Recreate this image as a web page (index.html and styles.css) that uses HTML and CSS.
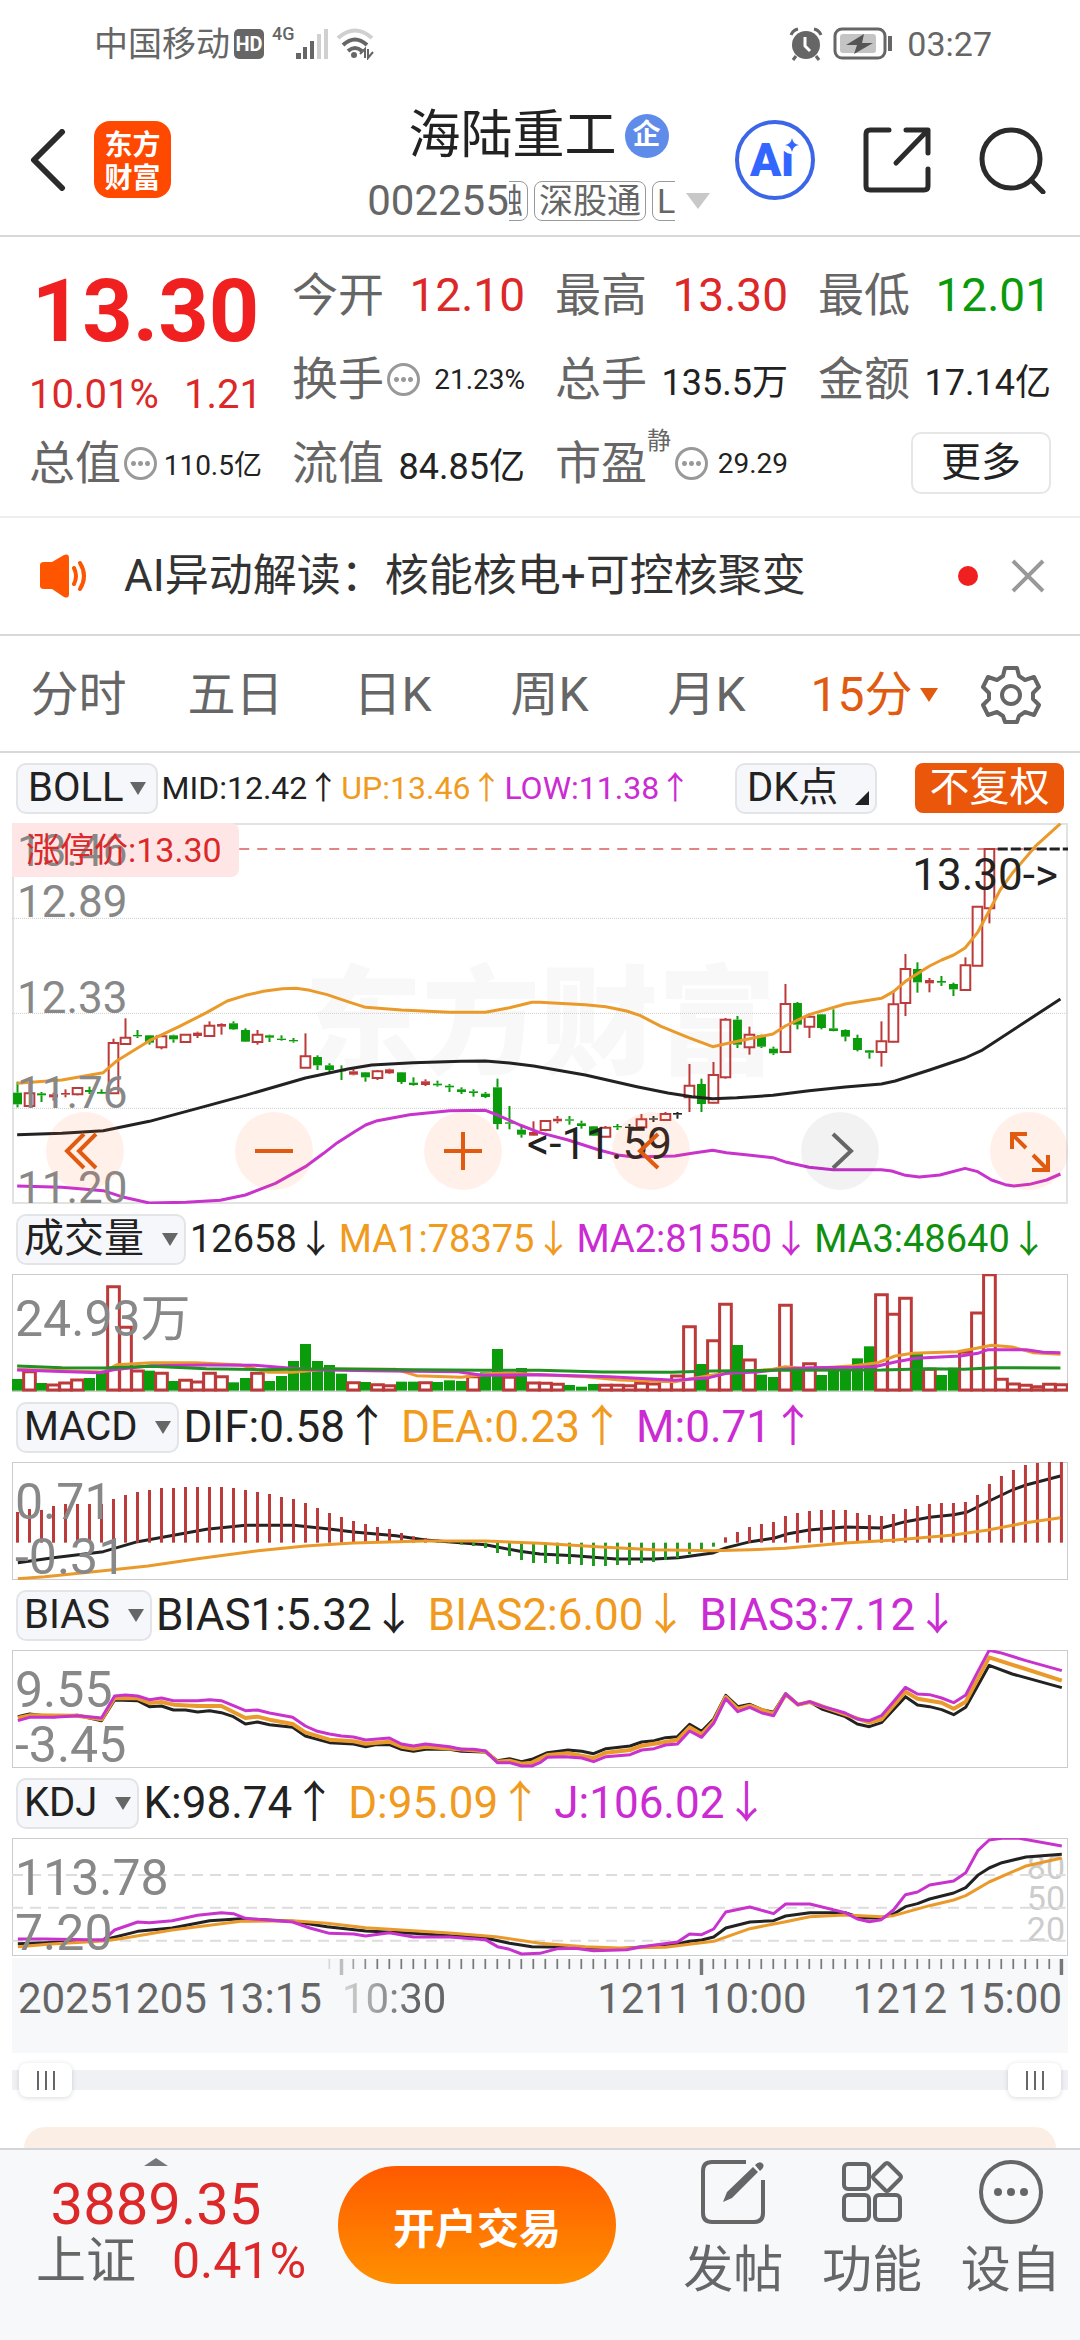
FILE: index.html
```html
<!DOCTYPE html>
<html lang="zh-CN">
<head>
<meta charset="utf-8">
<meta name="viewport" content="width=device-width, initial-scale=1">
<title>海陆重工 002255</title>
<link rel="stylesheet" href="styles.css">
</head>
<body>
<div class="page">
  <div class="status">
    <div class="status-side">
      <span>中国移动</span>
      <span class="hd">HD</span>
      <span class="net">4G</span>
      <svg class="signal" viewBox="0 0 34 32"><g fill="#666"><rect x="1" y="25" width="5" height="6"/><rect x="8" y="19" width="4" height="12"/><rect x="15" y="13" width="4" height="18"/></g><g fill="#d0d0d0"><rect x="22" y="6" width="4" height="25"/><rect x="29" y="1" width="4" height="30"/></g></svg>
      <svg class="wifi" viewBox="0 0 38 32"><g fill="none" stroke-width="4"><path stroke="#d0d0d0" d="M2 10Q19-5 36 10"/><path stroke="#666" d="M7 17Q19 6 31 17M12 23Q19 17 26 23"/></g><circle cx="18" cy="27" r="3" fill="#666"/><path d="M24 26l5-5v9M37 24l-5 6v-9" fill="none" stroke="#666" stroke-width="2"/></svg>
    </div>
    <div class="status-side">
      <svg class="alarm" viewBox="0 0 34 34"><circle cx="17" cy="18" r="14" fill="#666"/><path d="M2 8q2-5 7-6M32 8q-2-5-7-6M7 29l-3 4M27 29l3 4" fill="none" stroke="#666" stroke-width="3"/><path d="M16 10v9l5 5" fill="none" stroke="#fff" stroke-width="3"/></svg>
      <svg class="battery" viewBox="0 0 60 34"><rect x="2" y="2" width="50" height="29" rx="7" fill="none" stroke="#666" stroke-width="3"/><rect x="7" y="7" width="36" height="19" rx="3" fill="#c4c4c4"/><path d="M31 7L13 18h11l-3 9 19-11H29z" fill="#555"/><path d="M57 9v15" stroke="#666" stroke-width="4"/></svg>
      <span>03:27</span>
    </div>
  </div>

  <header class="header">
    <div class="head-left">
      <button class="icon-btn" aria-label="返回"><svg width="36" height="62" viewBox="0 0 36 62"><path d="M32 3L4 31l28 28" fill="none" stroke="#2b2b2b" stroke-width="6" stroke-linecap="round" stroke-linejoin="round"/></svg></button>
      <a class="logo" href="#"><span>东方</span><span>财富</span></a>
    </div>
    <div class="head-title">
      <h1>海陆重工<span class="ent">企</span></h1>
      <div class="code"><span class="code-no">002255</span><div class="tags"><span>融</span><span>深股通</span><span>L2</span></div><i class="tri-code"></i></div>
    </div>
    <div class="head-right">
      <button class="icon-btn"><svg width="80" height="80" viewBox="0 0 80 80"><circle cx="40" cy="40" r="38" fill="none" stroke="#3b66e8" stroke-width="4"/><text class="ai" x="15" y="56">Ai</text><circle cx="56" cy="25" r="9" fill="#fff"/><path d="M57 18q1 6 7 7-6 1-7 7-1-6-7-7 6-1 7-7z" fill="#3366ff"/></svg></button>
      <button class="icon-btn" aria-label="分享"><svg width="68" height="66" viewBox="0 0 68 66"><path d="M26 3H7q-4 0-4 4v52q0 4 4 4h54q4 0 4-4V42M43 3h22v23M64 4L33 36" fill="none" stroke="#2b2b2b" stroke-width="5" stroke-linecap="round" stroke-linejoin="round"/></svg></button>
      <button class="icon-btn" aria-label="搜索"><svg width="68" height="68" viewBox="0 0 68 68"><circle cx="32" cy="33" r="29" fill="none" stroke="#2b2b2b" stroke-width="5"/><path d="M52 54l12 12" stroke="#2b2b2b" stroke-width="5" stroke-linecap="round"/></svg></button>
    </div>
  </header>

  <section class="quote">
    <div class="price"><strong>13.30</strong><p><span>10.01%</span><span>1.21</span></p></div>
    <dl><dt>今开</dt><dd class="big red">12.10</dd></dl>
    <dl><dt>最高</dt><dd class="big red">13.30</dd></dl>
    <dl><dt>最低</dt><dd class="big green">12.01</dd></dl>
    <dl><dt>换手<i class="more-dot"></i></dt><dd class="small">21.23%</dd></dl>
    <dl><dt>总手</dt><dd>135.5万</dd></dl>
    <dl><dt>金额</dt><dd>17.14亿</dd></dl>
    <dl><dt>总值<i class="more-dot"></i></dt><dd class="small">110.5亿</dd></dl>
    <dl><dt>流值</dt><dd>84.85亿</dd></dl>
    <dl><dt>市盈<sup>静</sup><i class="more-dot"></i></dt><dd class="small">29.29</dd></dl>
    <button class="more">更多</button>
  </section>

  <div class="news">
    <svg width="50" height="44" viewBox="0 0 50 44"><path d="M2 11q0-3 4-3h8L26 1q5-2 5 3v36q0 5-5 3L14 35H6q-4 0-4-3z" fill="#ff5500"/><path d="M36 14q4 8 0 16M42 9q8 13 0 26" fill="none" stroke="#ff5500" stroke-width="4" stroke-linecap="round"/></svg>
    <a href="#">AI异动解读：核能核电+可控核聚变</a>
    <i class="dot"></i>
    <button class="icon-btn" aria-label="关闭"><svg width="36" height="36" viewBox="0 0 36 36"><path d="M3 3l30 30M33 3L3 33" stroke="#999" stroke-width="4"/></svg></button>
  </div>

  <nav class="tabs">
    <button>分时</button><button>五日</button><button>日K</button><button>周K</button><button>月K</button>
    <button class="active">15分<i class="tri-tab"></i></button>
    <button aria-label="设置"><svg width="60" height="60" viewBox="0 0 60 60"><path d="M24 3h12l2 8 6 4 9-3 5 10-6 6v6l6 6-5 10-9-3-6 4-2 6H24l-2-6-6-4-9 3-5-10 6-6v-6l-6-6 5-10 9 3 6-4z" fill="none" stroke="#666" stroke-width="4" stroke-linejoin="round"/><circle cx="30" cy="30" r="9" fill="none" stroke="#666" stroke-width="4"/></svg></button>
  </nav>

  <main class="charts">
    <div class="bar bar-boll">
      <button class="pick">BOLL<i></i></button>
      <div class="values tiny"><span>MID:12.42<b>↑</b></span><span class="c-or">UP:13.46<b>↑</b></span><span class="c-pu">LOW:11.38<b>↑</b></span></div>
      <button class="dk">DK点<i></i></button>
      <button class="adj">不复权</button>
    </div>
    <div class="plot main-plot">
      <span class="watermark">东方财富</span>
      <div class="limit-bg"></div>
      <svg id="main" viewBox="35 39 3067 1143" preserveAspectRatio="none"></svg>
      <div class="scale"><span class="first">13.46</span><span>12.89</span><span>12.33</span><span>11.76</span><span>11.20</span></div>
      <span class="limit">涨停价:13.30</span>
      <span class="high">13.30-&gt;</span>
      <span class="low">&lt;-11.59</span>
      <div class="tools">
        <button aria-label="最早"><svg viewBox="0 0 78 78"><path d="M38 22L21 39l17 17M50 22L33 39l17 17"/></svg></button>
        <button aria-label="缩小"><svg viewBox="0 0 78 78"><path d="M20 39h38"/></svg></button>
        <button aria-label="放大"><svg viewBox="0 0 78 78"><path d="M20 39h38M39 20v38"/></svg></button>
        <button aria-label="前移"><svg viewBox="0 0 78 78"><path d="M46 22L28 39l18 17"/></svg></button>
        <button class="off" aria-label="后移"><svg viewBox="0 0 78 78"><path d="M32 22l18 17-18 17"/></svg></button>
        <button aria-label="全屏"><svg viewBox="0 0 78 78"><path d="M22 37V22h15M22 22l14 14M58 43v15H42M58 58L43 43"/></svg></button>
      </div>
    </div>

    <div class="bar">
      <button class="pick">成交量<i></i></button>
      <div class="values mid"><span>12658<b>↓</b></span><span class="c-or">MA1:78375<b>↓</b></span><span class="c-pu">MA2:81550<b>↓</b></span><span class="c-gr">MA3:48640<b>↓</b></span></div>
    </div>
    <div class="plot"><svg id="vol" viewBox="35 222 3067 354" preserveAspectRatio="none"></svg><div class="range one"><span>24.93万</span></div></div>

    <div class="bar">
      <button class="pick">MACD<i></i></button>
      <div class="values"><span>DIF:0.58<b>↑</b></span><span class="c-or">DEA:0.23<b>↑</b></span><span class="c-pu">M:0.71<b>↑</b></span></div>
    </div>
    <div class="plot"><svg id="macd" viewBox="35 786 3067 354" preserveAspectRatio="none"></svg><div class="range"><span>0.71</span><span>-0.31</span></div></div>

    <div class="bar">
      <button class="pick">BIAS<i></i></button>
      <div class="values"><span>BIAS1:5.32<b>↓</b></span><span class="c-or">BIAS2:6.00<b>↓</b></span><span class="c-pu">BIAS3:7.12<b>↓</b></span></div>
    </div>
    <div class="plot"><svg id="bias" viewBox="35 180 3067 354" preserveAspectRatio="none"></svg><div class="range"><span>9.55</span><span>-3.45</span></div></div>

    <div class="bar">
      <button class="pick">KDJ<i></i></button>
      <div class="values"><span>K:98.74<b>↑</b></span><span class="c-or">D:95.09<b>↑</b></span><span class="c-pu">J:106.02<b>↓</b></span></div>
    </div>
    <div class="plot"><div class="levels"><span>80</span><span>50</span><span>20</span></div><svg id="kdj" viewBox="35 744 3067 354" preserveAspectRatio="none"></svg><div class="range"><span>113.78</span><span>7.20</span></div></div>

    <div class="axis">
      <svg id="ticks" viewBox="35 0 3067 18" preserveAspectRatio="none"></svg>
      <div class="dates"><span>20251205 13:15</span><span class="faded">10:30</span><span class="right">1211 10:00</span><span>1212 15:00</span></div>
    </div>

    <div class="zoom">
      <input type="range" min="0" max="100" value="0" aria-label="起始位置">
      <input type="range" min="0" max="100" value="100" aria-label="结束位置">
    </div>
    <div class="card"></div>
  </main>

  <footer class="dock">
    <a class="index" href="#">
      <i class="tri-up"></i>
      <span class="index-val">3889.35</span>
      <span class="index-row"><span>上证</span><span class="red">0.41%</span></span>
    </a>
    <button class="trade">开户交易</button>
    <div class="acts">
      <button><svg viewBox="0 0 66 66"><path d="M46 3H12q-9 0-9 9v42q0 9 9 9h42q9 0 9-9V21" fill="none" stroke="#666" stroke-width="4"/><path d="M23 43l4-10 26-25 5 5-26 26zM55 6q5-5 8-1 2 3-3 7z" fill="#666"/></svg>发帖</button>
      <button><svg viewBox="0 0 66 66"><g fill="none" stroke="#666" stroke-width="4"><rect x="5" y="5" width="25" height="25" rx="4"/><rect x="5" y="36" width="25" height="25" rx="4"/><rect x="36" y="36" width="25" height="25" rx="4"/><path d="M46 5q2-2 4 0l11 11q2 2 0 4L50 31q-2 2-4 0L35 20q-2-2 0-4z"/></g></svg>功能</button>
      <button><svg viewBox="0 0 66 66"><circle cx="33" cy="33" r="30" fill="none" stroke="#666" stroke-width="4"/><g fill="#666"><circle cx="20" cy="33" r="4"/><circle cx="33" cy="33" r="4"/><circle cx="46" cy="33" r="4"/></g></svg>设自</button>
    </div>
  </footer>
</div>
<script src="charts.js"></script>
</body>
</html>
```
FILE: styles.css
```css
* { box-sizing: border-box; }
body { margin: 0; background: #fff; color: #222; font-family: Roboto, "Noto Sans CJK SC", sans-serif; }
button { border: 0; padding: 0; margin: 0; background: none; color: inherit; font: inherit; cursor: pointer; white-space: nowrap; }
a { color: inherit; text-decoration: none; }
svg { display: block; }
h1, p, dl, dd { margin: 0; }
.page { display: flex; flex-direction: column; min-height: 100vh; overflow: hidden; }
.red { color: #dc2828; }
.green { color: #0a9a0a; }
.c-or { color: #f09a1e; }
.c-pu { color: #cb2bd2; }
.c-gr { color: #109010; }

/* status bar */
.status { display: flex; justify-content: space-between; height: 84px; padding: 4px 88px 0 94px; font-size: 34px; line-height: 40px; color: #666; align-items: center; }
.status-side { display: flex; align-items: center; }
.hd { margin-left: 4px; width: 30px; height: 30px; border-radius: 5px; background: #666; color: #fff; font-size: 20px; line-height: 30px; font-weight: 700; text-align: center; }
.net { align-self: flex-start; margin-left: 8px; font-size: 18px; line-height: 20px; font-weight: 500; }
.signal { width: 34px; height: 32px; }
.wifi { width: 38px; height: 32px; margin-left: 7px; }
.alarm { width: 34px; height: 34px; margin-right: 10px; }
.battery { width: 60px; height: 34px; margin-right: 14px; }

/* header */
.header { display: grid; grid-template-columns: 1fr auto 1fr; height: 153px; padding: 0 33px 0 30px; border-bottom: 2px solid #d8d8d8; }
.icon-btn { flex: none; }
.head-left, .head-right { display: flex; align-items: center; }
.head-left { gap: 28px; }
.head-right { justify-content: flex-end; gap: 48px; }
.ai { font-size: 46px; font-weight: 900; fill: #3366ff; }
.logo { display: flex; flex-direction: column; justify-content: center; width: 77px; height: 77px; border-radius: 16px; background: #ff4800; color: #fff; font: 700 28px/33px "Noto Sans CJK SC", sans-serif; text-align: center; }
.head-title { padding-top: 22px; }
h1 { display: flex; justify-content: center; align-items: center; gap: 8px; font-size: 52px; line-height: 60px; font-weight: 400; }
.ent { width: 44px; height: 44px; border-radius: 50%; background: #5f8ce8; color: #fff; font-size: 28px; line-height: 42px; font-weight: 700; text-align: center; }
.code { display: flex; align-items: center; margin-top: 13px; color: #666; font-size: 42px; line-height: 44px; }
.tags { display: flex; justify-content: center; gap: 6px; width: 166px; overflow: hidden; font-size: 34px; line-height: 38px; }
.tags span { flex: none; padding: 0 4px; border: 1px solid #999; border-radius: 8px; }
.tri-code { margin-left: 11px; border: 12px solid transparent; border-top: 16px solid #c8c8c8; border-bottom: 0; }

/* quote */
.quote { display: grid; grid-template-columns: repeat(4, 1fr); grid-auto-rows: 84px; column-gap: 30px; padding: 16px 29px 11px; border-bottom: 2px solid #eee; }
.price { grid-row: span 2; color: #f02020; text-align: center; }
.price strong { display: block; font-size: 88px; line-height: 100px; padding-top: 8px; }
.price p { display: flex; justify-content: space-between; color: #dc2828; font-size: 40px; line-height: 48px; margin-top: 10px; }
.quote dl { display: flex; justify-content: space-between; align-items: center; white-space: nowrap; }
.quote dt { display: flex; align-items: center; color: #666; font-size: 46px; line-height: 56px; }
.quote dd { font-size: 36px; }
.quote .big { font-size: 46px; }
.quote .small { font-size: 28px; }
.quote sup { align-self: flex-start; font-size: 24px; line-height: 24px; margin-top: -6px; }
.more-dot { flex: none; width: 33px; height: 33px; margin-left: 3px; border: 3px solid #999; border-radius: 50%; background: radial-gradient(circle, #999 2px, transparent 3px) center / 7px 7px content-box no-repeat, radial-gradient(circle, #999 2px, transparent 3px) 3px 10px / 7px 7px no-repeat, radial-gradient(circle, #999 2px, transparent 3px) 17px 10px / 7px 7px no-repeat; }
sup + .more-dot { margin-left: 4px; }
.more { align-self: center; justify-self: end; width: 140px; height: 62px; border: 2px solid #e6e6e6; border-radius: 10px; font-size: 40px; line-height: 56px; }

/* news line */
.news { display: flex; align-items: center; height: 118px; padding: 0 34px 0 38px; border-bottom: 2px solid #d8d8d8; font-size: 44px; line-height: 60px; color: #333; }
.news a { flex: 1; margin-left: 36px; white-space: nowrap; }
.dot { width: 20px; height: 20px; border-radius: 50%; background: #f02020; margin-right: 32px; }

/* period tabs */
.tabs { display: grid; grid-template-columns: repeat(6, 1fr) 138px; height: 117px; padding-top: 2px; border-bottom: 2px solid #d8d8d8; color: #666; font-size: 48px; line-height: 60px; }
.tabs button { display: flex; align-items: center; justify-content: center; }
.tabs .active { color: #e05a10; margin-left: 22px; }
.tri-tab { margin-left: 8px; border: 9px solid transparent; border-top: 14px solid #e05a10; border-bottom: 0; }

/* indicator rows */
.charts { flex: 1; display: flex; flex-direction: column; }
.bar { display: flex; align-items: center; gap: 4px; height: 70px; padding: 0 16px; white-space: nowrap; }
.pick, .dk { flex: none; display: flex; align-items: center; height: 51px; padding: 0 6px; border: 2px solid #e2e4e8; border-radius: 10px; background: #f6f7fa; font-size: 40px; line-height: 44px; }
.pick i { margin-left: 18px; border: 8px solid transparent; border-top: 13px solid #666; border-bottom: 0; }
.bar-boll .pick i { margin-left: 6px; }
.bar-boll .pick { padding: 0 10px; }
.values { display: flex; gap: 12px; font-size: 44px; line-height: 52px; }
.values.mid { gap: 4px; font-size: 38px; }
.values.tiny { flex: 1; gap: 2px; font-size: 32px; }
.values b { font-family: "Noto Sans CJK SC", sans-serif; font-weight: 400; line-height: 40px; }
.dk { position: relative; padding: 0 10px; width: 142px; margin-right: 34px; }
.dk i { position: absolute; right: 6px; bottom: 7px; border-left: 14px solid transparent; border-bottom: 14px solid #222; }
.adj { width: 149px; height: 50px; border-radius: 8px; background: #ea560a; color: #fff; font-size: 40px; line-height: 48px; }

/* plots */
.plot { position: relative; height: 118px; margin: 0 12px; outline: 1px solid #ccc; outline-offset: -1px; overflow: hidden; }
.main-plot { height: 381px; outline: 2px solid #e2e2e2; outline-offset: -2px; }
.plot svg { position: relative; width: 100%; height: 100%; }
.plot svg * { vector-effect: non-scaling-stroke; }
.watermark { position: absolute; inset: 0; display: flex; align-items: center; justify-content: center; color: #f8f8f8; font-size: 118px; font-weight: 900; }
.limit-bg { position: absolute; left: 0; top: 0; width: 227px; height: 54px; border-radius: 0 8px 8px 0; background: #ffe6e6; }
.scale { position: absolute; inset: 0 auto 0 5px; display: grid; grid-template-rows: repeat(4, 1fr); align-items: end; color: #888; font-size: 44px; line-height: 32px; }
.scale span { grid-column: 1; }
.scale .first { grid-row: 1; align-self: start; padding-top: 12px; }
.scale .first + span { grid-row: 1; }
.limit { position: absolute; left: 14px; top: 6px; color: #dc2828; font-size: 34px; line-height: 42px; }
.high, .low { position: absolute; font-size: 44px; line-height: 52px; color: #222; }
.high { right: 10px; top: 26px; }
.low { left: 515px; top: 295px; }
.tools { position: absolute; inset: auto 0 14px 34px; display: flex; justify-content: space-between; }
.tools button { width: 78px; height: 78px; border-radius: 50%; background: rgba(255, 110, 50, .1); }
.tools path { fill: none; stroke: #e05a10; stroke-width: 4px; }
.tools .off { background: rgba(0, 0, 0, .05); }
.tools .off path { stroke: #666; }
.range { position: absolute; left: 3px; top: 13px; display: flex; flex-direction: column; color: #888; font-size: 50px; line-height: 55px; }
.range.one { top: 18px; }
.levels { position: absolute; right: 3px; top: 14px; display: flex; flex-direction: column; color: #ccc; font-size: 34px; line-height: 31px; }

/* time axis */
.axis { height: 95px; margin: 2px 12px 0; background: #f7f8fa; }
.axis svg { width: 100%; height: 18px; }
.dates { display: flex; padding: 0 6px; margin-top: 1px; color: #666; font-size: 42px; line-height: 44px; white-space: nowrap; }
.faded { margin-left: 20px; background: linear-gradient(90deg, #d8d8d8, #666 70px); background-clip: text; color: transparent; }
.dates .right { margin-left: auto; margin-right: 46px; }

/* zoom slider */
.zoom { display: grid; height: 54px; margin: 0 12px; align-items: center; background: linear-gradient(#f0f1f4, #f0f1f4) center / 100% 20px no-repeat; }
.zoom input { grid-area: 1 / 1; width: auto; margin: 0 7px; height: 34px; appearance: none; background: none; pointer-events: none; }
.zoom input::-webkit-slider-thumb { appearance: none; pointer-events: auto; width: 53px; height: 34px; border-radius: 8px; box-shadow: 0 1px 5px rgba(0, 0, 0, .15); background: linear-gradient(90deg, #666 2px, transparent 2px, transparent 8px, #666 8px, #666 10px, transparent 10px, transparent 16px, #666 16px) center / 18px 19px no-repeat #fff; }
.card { flex: none; height: 21px; margin: 20px 24px 0; border-radius: 45px 45px 0 0; background: #fbeee5; }

/* bottom dock */
.dock { display: grid; grid-template-columns: 338px 278px 1fr; height: 192px; border-top: 2px solid #d4d5d8; background: #f7f8fa; color: #666; }
.index { display: flex; flex-direction: column; align-items: center; padding-right: 26px; }
.tri-up { margin: 8px 0; border: 12px solid transparent; border-bottom: 8px solid #76777c; border-top: 0; }
.index-val { color: #dc2828; font-size: 58px; line-height: 60px; }
.index-row { display: flex; gap: 36px; align-items: center; margin-left: 30px; font-size: 50px; line-height: 54px; }
.trade { height: 118px; margin-top: 16px; border-radius: 59px; background: linear-gradient(#ff5a00, #ff9000); color: #fff; font-size: 42px; font-weight: 700; }
.acts { display: grid; grid-template-columns: repeat(3, 1fr); padding: 9px 0 0 48px; }
.acts button { display: flex; flex-direction: column; align-items: center; gap: 12px; font-size: 50px; line-height: 66px; }
.acts svg { width: 66px; height: 66px; }
```
FILE: charts.js
```js
const NS = "http://www.w3.org/2000/svg";
const RED = "#bd3a3a", GREEN = "#0a9c0a", BLACK = "#222", ORANGE = "#ea9a2a", PURPLE = "#c832cd";
const STEP = 34.85, FIRST = 51;
const at = i => FIRST + STEP * i;

function add(id, tag, attrs) {
  const el = document.createElementNS(NS, tag);
  for (const k in attrs) el.setAttribute(k, attrs[k]);
  document.getElementById(id).appendChild(el);
}
const line = (id, color, points, width = 3) =>
  add(id, "polyline", { points, fill: "none", stroke: color, "stroke-width": width, "stroke-linejoin": "round" });
const seg = (id, x1, y1, x2, y2, stroke, w, extra = {}) =>
  add(id, "line", { x1, y1, x2, y2, stroke, "stroke-width": w, ...extra });

// price: grid, limit line, candles (kind, high, top, bottom, low), bands
[325, 610, 895].forEach(y => seg("main", 35, y, 3102, y, "#ccc", 1, { "stroke-dasharray": "1 1" }));
seg("main", 695, 117, 3102, 117, "#df8585", 2, { "stroke-dasharray": "10 8" });
seg("main", 2898, 117, 3102, 117, "#222", 3, { "stroke-dasharray": "10 3" });

`g 815 848 883 892|h 802 850 888 888|g 846 850 856 876|r 848 853 862 872|r 838 849 854 862|h 832 834 853 856|g 830 840 846 852|g 838 846 851 852|h 686 699 850 850|h 625 683 702 704
g 660 675 679 684|g 675 676 698 704|h 675 679 712 718|g 674 676 688 698|h 672 674 696 698|r 665 668 678 684|h 634 647 678 680|r 640 642 650 674|g 634 640 658 660|g 655 660 695 696
h 660 674 696 704|g 674 676 683 696|g 676 686 690 692|g 684 690 694 698|h 670 739 773 774|g 736 741 766 780|g 760 766 780 790|g 766 780 784 810|r 778 784 794 796|g 786 787 802 815
h 780 784 804 810|r 776 778 790 792|g 786 787 816 822|g 802 818 825 827|r 808 814 825 828|g 812 821 826 830|g 822 827 832 846|g 832 838 846 852|g 838 844 849 860|g 846 851 861 864
g 806 832 942 958|g 888 937 941 958|g 946 959 974 983|r 934 966 977 978|h 930 933 960 964|r 918 926 934 940|g 918 928 932 944|g 932 940 948 956|g 948 949 977 978|h 948 953 980 982
g 942 948 952 960|k 942 950 954 960|h 912 928 952 954|k 918 925 929 936|h 906 912 930 932|k 906 909 914 926|h 762 827 862 906|g 806 822 882 906|h 756 795 878 880|h 624 629 802 806
g 618 629 704 714|h 650 674 712 734|g 674 676 710 714|g 710 716 730 735|h 522 582 726 728|g 576 579 644 658|h 610 620 650 684|g 612 613 654 658|g 598 655 663 664|g 658 660 680 694
g 674 684 720 724|g 720 721 728 746|h 634 694 726 770|h 546 583 695 697|h 432 477 579 618|g 457 477 517 548|r 504 510 520 547|g 498 513 518 528|g 518 522 538 558|h 442 466 540 542
h 288 290 467 468|h 117 117 295 340`.split(/[|\n]/).forEach((row, i) => {
  const [kind, ...v] = row.split(" ");
  const [hi, top, bot, lo] = v.map(Number);
  const color = { g: GREEN, k: BLACK }[kind] || RED;
  const x = at(i), hollow = kind === "h";
  seg("main", x, hi, x, top, color, 2);
  seg("main", x, bot, x, lo, color, 2);
  if (hollow) add("main", "rect", { x: x - 14, y: top, width: 28, height: bot - top, fill: "none", stroke: color, "stroke-width": 2 });
  else add("main", "rect", { x: x - 13, y: top, width: 26, height: bot - top, fill: color });
});
line("main", BLACK, "50,974 180,970 300,962 434,934 574,895 713,856 887,804 1010,777 1080,765 1200,758 1340,754 1410,753 1480,759 1550,768 1700,795 1850,830 1940,849 2010,860 2070,866 2140,863 2245,856 2350,842 2455,831 2560,822 2600,813 2700,780 2803,744 2850,722 3080,567");
line("main", ORANGE, "50,820 180,810 300,788 340,752 434,692 520,650 600,608 660,573 713,556 765,544 820,536 860,535 900,541 950,554 1010,575 1062,592 1166,600 1306,607 1410,607 1480,593 1545,577 1568,577 1700,584 1760,590 1820,603 1860,617 1920,649 2000,683 2070,710 2105,702 2160,690 2245,672 2281,648 2350,614 2455,582 2560,565 2595,545 2630,514 2700,468 2735,450 2770,435 2803,414 2839,368 2873,303 2905,240 2940,190 3010,106 3080,41");
line("main", PURPLE, "50,1128 180,1132 300,1142 360,1162 434,1179 540,1177 640,1171 713,1155 800,1120 887,1070 940,1030 980,998 1030,965 1062,945 1096,932 1190,914 1306,902 1410,901 1445,915 1510,945 1568,968 1650,990 1740,1020 1800,1036 1840,1041 1960,1038 2010,1030 2070,1021 2110,1028 2180,1036 2245,1043 2285,1057 2350,1072 2420,1079 2560,1079 2590,1083 2630,1096 2670,1101 2730,1095 2803,1075 2840,1085 2880,1110 2920,1124 2945,1128 2990,1123 3040,1110 3080,1092");

// volume
`g537 h515 g549 h555 h549 h540 g534 g518 h260 h382 h513 g512 h520 g543 h541 h546 h520 h530 g547 g534 h520 g543 g528 g483 g432 g483 g495 g521 h548 g546
h554 h557 g545 g545 h548 g546 g541 g543 h530 g517 g447 h532 g504 h549 h550 h553 g555 g560 g552 h556 h556 h557 h550 h552 h543 h528 h380 g492 h422 h313
g435 h480 g524 g531 h316 g505 h491 g525 g505 g505 g475 g439 h284 h343 h295 g458 h508 g525 g503 h457 h339 h224 h538 h552 h556 h560 h553 h554`.split(/\s+/).forEach((d, i) => {
  const y = +d.slice(1), x = at(i);
  if (d[0] === "g") add("vol", "rect", { x: x - 16, y, width: 32, height: 572 - y, fill: GREEN });
  else add("vol", "rect", { x: x - 17, y, width: 34, height: 570 - y, fill: "#fff", stroke: RED, "stroke-width": 3 });
});
line("vol", ORANGE, "50,508 300,516 340,494 440,488 570,488 700,495 780,517 850,517 950,508 1150,508 1210,527 1340,532 1450,518 1568,524 1700,530 1800,540 1960,545 2070,525 2150,515 2245,508 2281,500 2350,506 2480,497 2550,488 2600,468 2650,460 2780,455 2840,444 2880,436 2940,441 3000,458 3080,463");
line("vol", PURPLE, "50,510 200,515 290,518 330,509 440,497 600,495 740,496 900,509 1080,512 1330,515 1400,526 1568,524 1770,530 1960,541 2060,533 2110,520 2200,516 2270,508 2350,503 2480,502 2540,500 2600,486 2660,475 2790,468 2840,460 2870,449 2980,449 3030,457 3080,458");
line("vol", "#229022", "50,498 180,503 300,504 440,499 600,506 750,509 950,506 1200,509 1410,511 1568,511 1750,516 1950,517 2070,513 2250,511 2560,510 2700,506 2800,508 2890,503 3080,504");

// MACD
line("macd", BLACK, "52,1088 155,1073 300,1055 400,1025 600,988 713,976 853,976 950,986 1027,996 1150,1007 1236,1020 1410,1034 1510,1054 1568,1062 1668,1067 1790,1077 1900,1077 1970,1073 2070,1059 2110,1043 2180,1025 2250,1014 2290,1001 2350,990 2455,981 2560,984 2630,965 2700,952 2770,944 2810,936 2873,903 2940,870 2980,855 3080,828");
[936, 927, 930, 918, 912, 912, 912, 912, 897, 885, 876, 870, 864, 864, 861, 861, 861, 861, 864, 870, 876, 882, 891, 897, 909, 924, 939, 951, 963, 972,
 981, 987, 999, 1009, 1014, 1018, 1022, 1034, 1038, 1044, 1059, 1068, 1080, 1089, 1089, 1092, 1092, 1095, 1098, 1098, 1095, 1095, 1089, 1086, 1080, 1074, 1062, 1054, 1040, 1012,
 996, 981, 972, 966, 948, 939, 933, 930, 930, 930, 939, 945, 948, 942, 927, 918, 912, 909, 909, 906, 885, 852, 828, 810, 795, 789, 786, 786].forEach((y, i) =>
  seg("macd", at(i), 1028, at(i), y, y > 1028 ? "#229a22" : RED, 3));
line("macd", ORANGE, "52,1136 130,1130 300,1112 430,1098 574,1076 750,1052 887,1038 1027,1029 1230,1023 1410,1023 1568,1030 1760,1042 1900,1049 2070,1052 2180,1049 2280,1045 2455,1029 2600,1020 2770,1005 2870,990 2970,970 3080,953");

// BIAS
line("bias", BLACK, "52,380 86,372 155,380 225,376 295,392 333,330 400,332 434,350 469,348 504,360 539,360 574,366 609,362 643,368 678,380 713,402 748,396 783,404 850,412 887,438 957,458 1027,462 1062,470 1090,464 1131,464 1166,478 1201,484 1236,478 1306,478 1340,484 1410,486 1445,512 1480,506 1515,515 1545,508 1590,488 1650,480 1690,484 1724,491 1760,476 1830,468 1864,456 1900,452 1933,443 1968,440 2003,403 2038,424 2073,387 2108,316 2143,350 2178,343 2213,359 2247,367 2282,311 2318,344 2352,336 2387,357 2455,380 2490,402 2525,410 2560,398 2630,320 2665,345 2700,350 2735,359 2770,374 2805,352 2873,226 2940,252 3084,293");
line("bias", ORANGE, "52,384 86,376 225,377 295,388 333,324 400,325 434,339 469,336 504,344 574,348 643,348 713,384 748,380 783,389 850,402 887,427 957,449 1027,454 1062,461 1131,455 1166,470 1201,476 1236,470 1410,484 1445,515 1480,512 1515,521 1545,518 1590,495 1650,490 1724,504 1760,488 1830,480 1864,467 1968,450 2003,412 2038,433 2073,394 2108,321 2143,357 2178,347 2247,372 2282,313 2318,344 2352,336 2455,373 2525,398 2560,388 2630,305 2665,326 2735,338 2770,356 2805,335 2873,202 3084,272", 4);
line("bias", PURPLE, "52,392 86,382 155,382 225,377 295,384 333,318 365,315 400,318 434,329 469,324 504,332 574,332 609,329 643,332 713,362 748,360 783,369 850,382 887,408 922,424 957,432 992,438 1027,441 1062,450 1131,444 1166,462 1201,468 1236,462 1306,470 1340,478 1375,478 1410,483 1445,518 1480,518 1515,528 1545,528 1568,518 1590,502 1640,500 1690,504 1724,515 1760,500 1830,494 1864,480 1900,476 1933,465 1968,462 2003,423 2038,442 2073,400 2108,326 2143,365 2178,352 2213,369 2247,377 2282,312 2318,344 2352,335 2390,350 2420,358 2455,369 2490,387 2525,392 2560,377 2595,335 2630,292 2665,312 2700,314 2735,324 2770,338 2805,315 2840,245 2873,181 2905,188 2980,212 3084,242");

// KDJ
[855, 953, 1052].forEach(y => seg("kdj", 35, y, 3095, y, "#ddd", 2, { "stroke-dasharray": "11 7" }));
line("kdj", BLACK, "52,1061 190,1056 300,1050 400,1024 500,1014 609,992 700,986 850,994 950,1010 1062,1023 1200,1030 1410,1044 1480,1060 1545,1070 1650,1072 1800,1076 1968,1062 2003,1054 2038,1050 2073,1041 2108,1014 2178,996 2247,992 2282,978 2352,968 2455,968 2500,984 2560,984 2595,972 2630,950 2665,941 2700,927 2770,909 2805,893 2840,856 2873,834 2910,818 2980,801 3084,793");
line("kdj", ORANGE, "52,1070 150,1062 300,1053 350,1046 500,1020 700,994 850,992 950,1000 1062,1013 1306,1029 1440,1040 1568,1060 1700,1070 1800,1074 1933,1072 2003,1063 2073,1054 2178,1016 2282,995 2352,980 2455,975 2560,980 2595,977 2700,947 2770,930 2805,917 2873,876 2980,828 3084,804");
line("kdj", PURPLE, "52,1047 130,1047 300,1050 333,1020 400,996 434,998 500,992 574,976 643,968 678,971 713,985 850,996 900,1014 957,1030 1027,1032 1062,1038 1131,1028 1201,1041 1306,1041 1410,1049 1445,1070 1480,1078 1515,1092 1568,1090 1620,1076 1670,1075 1724,1082 1820,1079 1864,1070 1968,1056 2003,1032 2038,1034 2073,1017 2108,966 2178,951 2247,971 2282,942 2352,942 2455,968 2490,987 2525,995 2560,989 2595,960 2630,914 2665,906 2700,885 2770,873 2805,848 2840,782 2873,750 2910,745 2960,745 3084,768");

// time ticks, fading in on the left
for (let i = 26; i < 88; i++) {
  const major = i % 30 === 27;
  add("ticks", "rect", { x: at(i) - (major ? 5 : 3), y: 1, width: major ? 10 : 5, height: major ? 16 : 10, fill: "#777", opacity: Math.min(1, .25 + (i - 26) * .2) });
}
```
